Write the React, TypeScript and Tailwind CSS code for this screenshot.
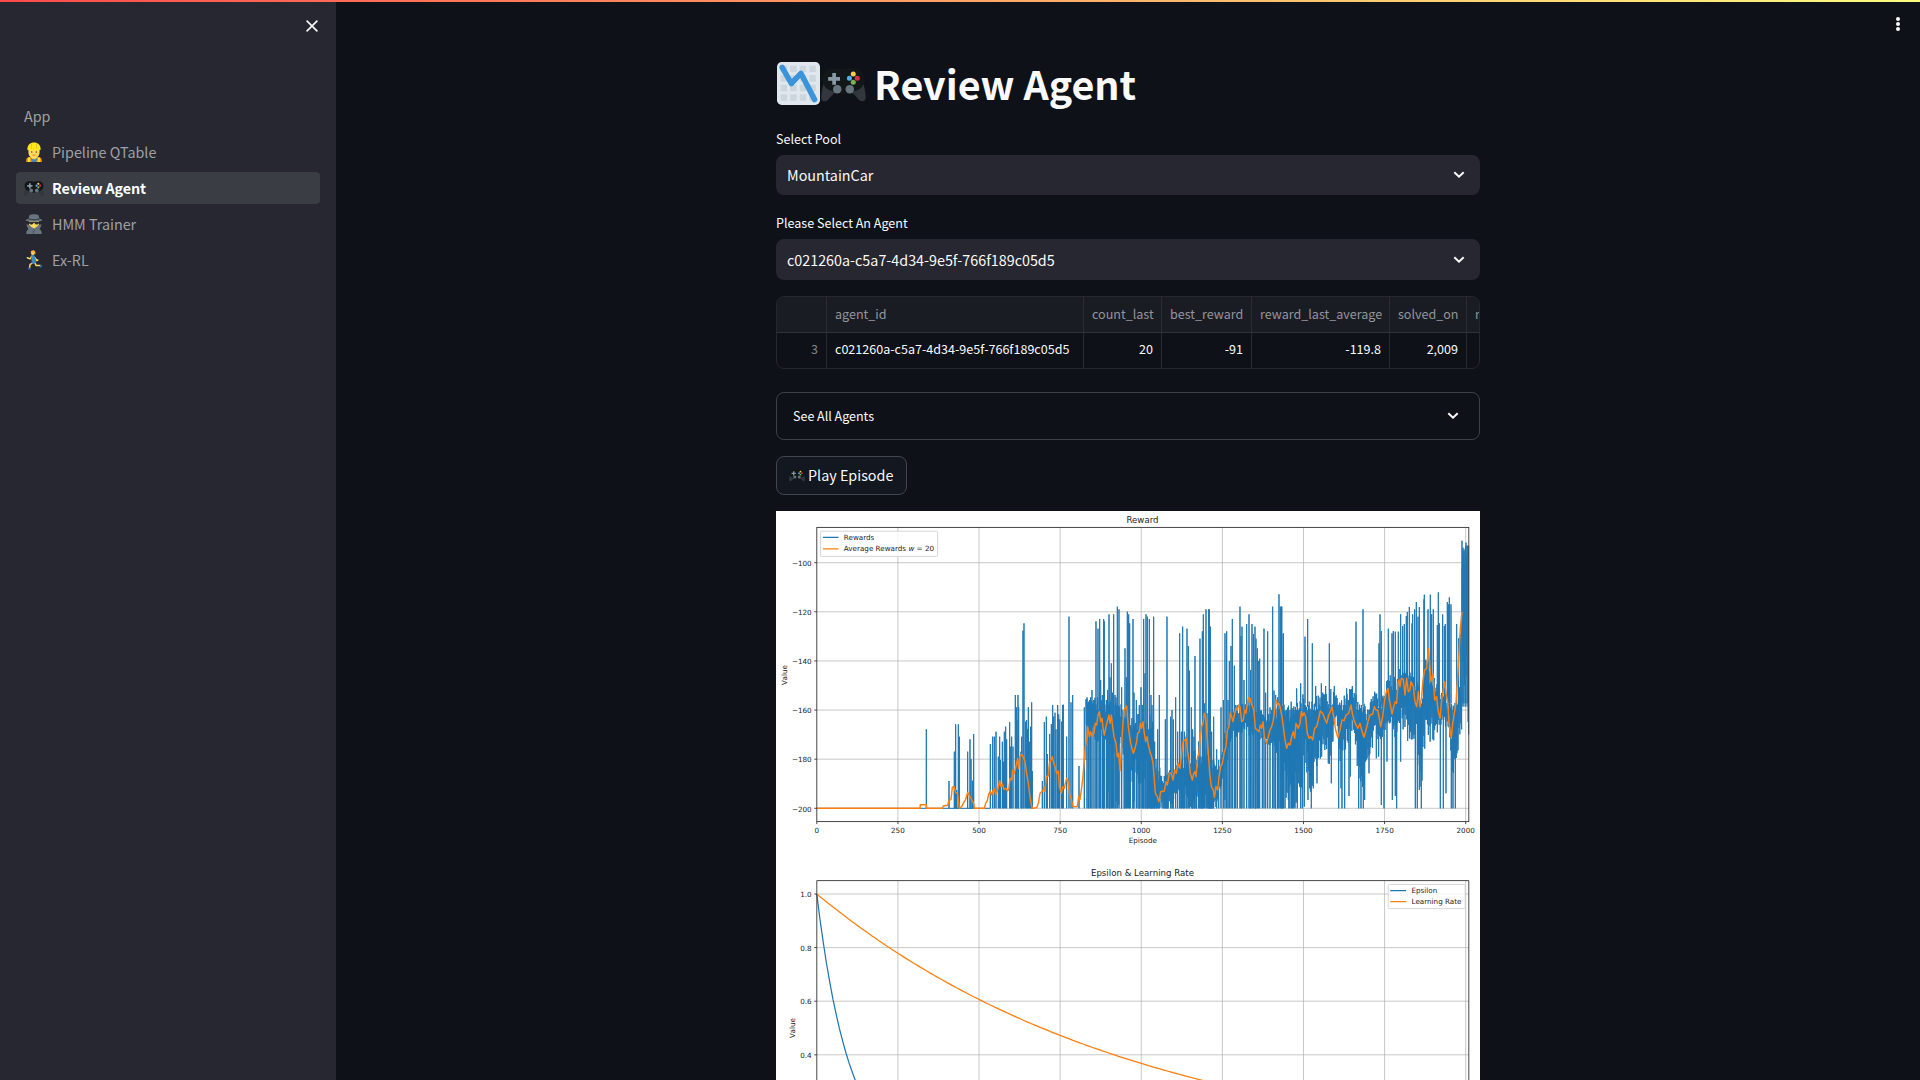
import React from "react";

type Pt = [number, number];

function pairs(s: string): Pt[] {
  return s
    .trim()
    .split(/\s+/)
    .map((p) => p.split(",").map(Number) as Pt);
}
const shift = (list: Pt[], dx: number, dy: number): Pt[] => list.map(([x, y]) => [x + dx, y + dy]);

// Series data is in thirds of a pixel, origin at (770, 560).
const PEAKS: Pt[] = [
  ...pairs(`469,508 537,663 553,575 557,493 560,690 565,493 568,530 593,575 600,538 603,597 607,662 611,522
  661,552 668,530 673,530 678,515 685,590 689,530 691,600 697,545 700,605 703,515 707,500 710,538 719,486 722,560 725,530 729,560 736,405 739,442 741,480 744,405 746,442 753,575 755,530 759,212 762,190 767,485 770,480 773,507 775,442 778,545 782,500 785,427 787,633
  817,663 823,486 829,470 832,582 839,522 844,492 848,435 851,470 855,458 858,508 863,435 866,463 869,478 875,485 878,435 880,434 890,530`),
  ...shift(
    pairs(`57,170 63,427 68,405 87,618 103,442 111,412 115,427 122,412 126,390 132,420 138,184 144,206 149,177 152,360 157,405 161,177 163,184 169,420 173,390 177,163 180,352 184,310 188,398 191,163 195,405 198,412 202,140 207,148 215,382 225,265 229,352 232,155 236,163 239,190 249,177 252,398 259,420 264,463 268,435 273,382 277,435 281,177 285,340 288,163 292,170 298,177 303,405 306,435 311,170 314,545 318,597 323,508 328,405 346,478 351,170 362,470 366,450 370,478 377,412 383,515 389,220 394,515 398,200 403,515 408,530 411,206 415,258 418,332 424,442 428,508 432,530 435,288 440,600 446,545 450,236 453,590 457,214 460,163 464,430 468,148 471,460 476,148 478,148 481,200 485,515 491,470 500,568 506,600 513,442 520,420 525,220 530,214 534,420 538,303 543,258 547,177 553,317 557,435 562,435 570,140 573,228 576,200 582,360 590,192 597,163 602,330 606,192 610,222 615,200 618,236 622,265 625,303 629,296 637,463 642,206 647,398 653,214 660,442 668,140 672,392 677,405 683,412 687,103 691,140 695,140 700,222 705,450`),
    840,
    0,
  ),
];
const LATE_PEAKS: Pt[] = shift(
  pairs(`5,290 10,370 50,535 62,520 75,380 83,327 97,400 107,528 124,520 137,528 148,400 163,528 200,535 217,528 228,335 249,298 284,545 297,400 300,313 304,363 325,356 336,370 340,363 346,365 355,365 362,313 368,348 373,342 379,318 382,306 388,291 396,340 398,313 404,298 409,276 414,320 418,291 432,268 433,254 444,298 451,254 455,313 460,298 472,345 475,247 478,340 488,313 493,348 496,342 502,276 505,283 508,262 513,283 530,342 536,385 542,370 546,92 549,113 552,125 556,115 558,98 562,107`),
  1530,
  -150,
);
const DIPS: Pt[] = shift(
  pairs(`10,870 20,845 25,870 30,895 35,895 40,895 45,895 52,895 62,895 73,890 84,870 89,835 94,895 100,835 111,820 125,740 145,760 154,820 176,895 183,835 186,895 194,895 207,858 211,800 236,895 240,805 243,895 250,895 254,870 267,790 289,745 296,740 304,885 312,895 321,755 337,870 346,858 350,895 362,755 406,895 412,895 418,840 420,830 424,895 481,895 490,895 498,850 514,895 519,895 526,895 531,730`),
  1530,
  -150,
);

// Dense body of the series: x, upper edge, lower edge, share of dips to the floor.
const BODY: [number, number, number, number][] = [
  [948, 425, 500, 0.4], [1000, 420, 540, 0.4], [1050, 440, 560, 0.45], [1080, 480, 640, 0.7], [1150, 470, 620, 0.7],
  [1152, 620, 740, 0.3], [1190, 650, 745, 0.3], [1225, 610, 680, 0.3], [1260, 590, 720, 0.5], [1320, 570, 740, 0.6],
  [1330, 610, 740, 0.2], [1345, 640, 700, 0.1], [1360, 540, 630, 0.2], [1385, 455, 530, 0.2], [1420, 435, 500, 0.2],
  [1460, 440, 520, 0.2], [1490, 470, 540, 0.2], [1530, 435, 560, 0.2], [1550, 445, 690, 0.2], [1590, 430, 700, 0.1],
  [1600, 410, 540, 0], [1620, 440, 670, 0], [1640, 420, 590, 0], [1660, 390, 530, 0], [1680, 400, 580, 0],
  [1698, 385, 470, 0], [1712, 420, 590, 0], [1730, 405, 530, 0], [1748, 390, 490, 0], [1768, 440, 640, 0],
  [1785, 440, 640, 0], [1800, 430, 570, 0], [1815, 400, 510, 0], [1832, 430, 530, 0], [1850, 360, 490, 0],
  [1875, 350, 510, 0], [1895, 330, 470, 0], [1920, 340, 520, 0], [1940, 350, 490, 0], [1952, 430, 650, 0],
  [1965, 300, 510, 0], [1990, 350, 510, 0], [2005, 390, 490, 0], [2020, 400, 480, 0], [2035, 440, 490, 0],
  [2045, 440, 600, 0], [2055, 440, 620, 0], [2065, 400, 520, 0], [2074, 380, 500, 0], [2076, -20, 380, 0],
  [2087, -30, 370, 0], [2095, -30, 400, 0],
];

const FLOOR = 745;

function buildRewards(): string {
  let seed = 11;
  const rnd = () => {
    seed = (seed * 16807) % 2147483647;
    return seed / 2147483647;
  };
  let d = `M140,${FLOOR}H660`;
  for (const [x, top] of PEAKS) d += `M${x - 0.5},${FLOOR}L${x},${top}L${x + 0.5},${FLOOR}`;
  for (const [x, top] of LATE_PEAKS) d += `M${x - 0.5},440L${x},${top}L${x + 0.5},${Math.max(430, top + 20)}`;
  for (const [x, low] of DIPS) d += `M${x - 0.5},450L${x},${low}L${x + 0.5},450`;
  let i = 0;
  d += "M948,600";
  for (let x = 948; x <= 2093; x += 2.7) {
    while (i < BODY.length - 2 && BODY[i + 1][0] < x) i++;
    const [x0, t0, b0, p] = BODY[i];
    const [x1, t1, b1] = BODY[i + 1];
    const f = (x - x0) / (x1 - x0);
    const top = t0 + (t1 - t0) * f;
    const bot = b0 + (b1 - b0) * f;
    const h = bot - top;
    const a = top + (rnd() - 0.25) * Math.min(h, 150) * 0.4;
    const b = rnd() < p * 0.6 ? (rnd() < 0.75 ? FLOOR : 690 + rnd() * 50) : Math.min(FLOOR, bot + (rnd() - 0.5) * h * 0.5);
    d += `L${x.toFixed(1)},${a.toFixed(0)}L${(x + 1).toFixed(1)},${b.toFixed(0)}`;
  }
  d += "M2096,-43V524";
  return d;
}
const REWARDS = buildRewards();

const AVERAGE = [
  ...pairs(`140,745 450,745 451,734 469,734 470,745 517,745 520,738 533,736 537,722 543,718 547,682 552,679 557,697 563,703 568,745 575,740 580,730 587,718 590,708 593,697 598,707 604,717 611,730 613,745 643,745 647,730 652,722 656,702 661,695 665,705 668,695 672,685 677,703 683,690 689,662 693,680 697,672 702,688 708,685 712,693 716,690 720,655 725,660 728,630 733,640 738,618 743,595 746,625 750,590 754,583 760,590 765,605 770,640 775,670 780,710 785,740 788,745 800,743 805,730 810,700 815,695 820,690 822,680 825,695 829,650 835,648 838,610 843,600 847,590 850,605 855,620 860,640 865,633 868,680 874,700 878,680 883,685 886,670 890,655 895,670 898,700 903,715 907,730 909,740 922,740 926,710 930,718 934,690 938,660 942,610 946,560 950,540 953,500 958,530 962,515 966,528 972,520 976,490 980,495 984,465 988,455 992,485 996,475 1000,510 1003,525 1008,500 1013,480 1017,465 1020,490 1024,465 1028,500 1032,530 1038,550 1042,590 1046,580 1050,632 1055,560 1058,500 1062,450 1070,438 1075,500 1079,530`),
  ...shift(
    pairs(`242,550 247,570 250,580 255,565 260,545 263,520 268,515 271,490 275,505 279,485 283,520 287,545 291,530 295,555 300,575 305,590 309,610 313,660 316,700 322,710 327,725 332,695 343,693 348,665 352,675 358,640 364,640 369,660 374,630 379,640 384,610 390,625 394,590 399,545 405,540 409,535 412,570 417,600 421,640 427,660 431,640 435,635 438,650 443,590 447,580 451,530 455,500 459,490 463,460 467,470 471,525 475,580 479,640 484,680 490,690 493,712 498,680 503,690 507,650 512,620 517,610 522,580 528,560 532,510 537,500 541,460 545,470 549,485 553,465 558,445 562,450 566,435 570,440 575,485 580,480 584,450 588,460 592,430 596,412 600,415 604,430 608,440 612,455 616,505 622,510 627,515 631,495 635,505 639,485 643,530 650,550 655,530 660,510 665,500 669,485 673,460 678,420 683,435 687,430`),
    840,
    0,
  ),
  ...shift(
    pairs(`0,590 5,615 10,650 15,690 20,715 25,700 30,705 35,680 40,665 44,685 48,640 55,655 60,640 64,605 68,618 72,608 77,620 82,670 87,685 93,680 98,690 104,655 110,650 116,625 121,603 128,610 134,625 140,640 146,615 151,605 156,590 161,620 167,660 174,683 180,660 186,630 192,632 198,615 206,610 213,585 217,610 222,630 228,645 234,655 240,640 245,660 252,682 258,660 264,635 270,615 278,612 283,590 288,600 293,600 298,625 302,650 308,620 314,570 318,550 324,535 328,570 334,600 336,612 341,590 346,575 350,580 354,520 357,510 360,530 364,505 370,508 375,555 380,505 385,545 390,540 393,515 400,530 405,575 410,590 415,545 420,590 425,560 429,510 434,480 440,475 445,415 449,460 453,515 459,492 464,570 470,560 474,600 480,625 485,570 489,545 494,515 498,550 503,575 507,640 514,685 518,640 523,610 528,580 533,500 537,430 541,355 546,305`),
    1530,
    -150,
  ),
]
  .map((p) => p.join(","))
  .join(" ");

const xAt = (ep: number) => 816.8 + ep * 0.32445;
const decay = (rate: number) => {
  let s = "";
  for (let ep = 0; ep <= 2009; ep += 10) s += `${xAt(ep).toFixed(1)},${(1162 - 268 * Math.exp(-rate * ep)).toFixed(1)} `;
  return s;
};
const X_TICKS = [0, 250, 500, 750, 1000, 1250, 1500, 1750, 2000];

function Charts() {
  return (
    <svg viewBox="776 511 704 569" className="block h-[569px] w-[704px] bg-white" fontFamily="'DejaVu Sans', sans-serif" fontSize="7.2" fill="#1c1c1c">
      <g stroke="#b0b0b0" strokeOpacity="0.7" strokeWidth="1">
        {X_TICKS.slice(1).map((t) => (
          <path key={t} d={`M${xAt(t)},527.3V821.5M${xAt(t)},880.6V1080`} />
        ))}
        {[0, 1, 2, 3, 4, 5].map((i) => (
          <path key={i} d={`M816.8,${562.7 + i * 49.12}H1468.8`} />
        ))}
        {[0, 1, 2, 3].map((i) => (
          <path key={i} d={`M816.8,${894 + i * 53.6}H1468.8`} />
        ))}
      </g>
      <g transform="translate(770 560) scale(0.33333)" fill="none" strokeLinejoin="round">
        <path d={REWARDS} stroke="#1f77b4" strokeWidth="3" strokeLinejoin="bevel" />
        <polyline points={AVERAGE} stroke="#ff7f0e" strokeWidth="4.400" />
      </g>
      <g fill="none" strokeWidth="1.250">
        <polyline points={decay(0.01)} stroke="#1f77b4" />
        <polyline points={decay(0.001)} stroke="#ff7f0e" />
      </g>
      <g fill="none" stroke="#333" strokeWidth="0.9">
        <rect x="816.8" y="527.4" width="652" height="294.2" />
        <path d="M816.8,1080V880.6H1468.8V1080" />
        {X_TICKS.map((t) => (
          <path key={t} d={`M${xAt(t)},821.6v2.5`} />
        ))}
        {[0, 1, 2, 3, 4, 5].map((i) => (
          <path key={i} d={`M816.8,${562.7 + i * 49.12}h-2.5`} />
        ))}
        {[0, 1, 2, 3].map((i) => (
          <path key={i} d={`M816.8,${894 + i * 53.6}h-2.5`} />
        ))}
      </g>
      <g textAnchor="end">
        {[100, 120, 140, 160, 180, 200].map((v, i) => (
          <text key={v} x="811.7" y={565.9 + i * 49.12}>{`−${v}`}</text>
        ))}
        {["1.0", "0.8", "0.6", "0.4"].map((v, i) => (
          <text key={v} x="811.7" y={896.9 + i * 53.6}>{v}</text>
        ))}
      </g>
      <g textAnchor="middle">
        {X_TICKS.map((t) => (
          <text key={t} x={xAt(t)} y="832.5">{t}</text>
        ))}
        <text x="1142.8" y="842.7">Episode</text>
        <text x="1142.5" y="522.9" fontSize="8.6">Reward</text>
        <text x="1142.5" y="876.2" fontSize="8.65">Epsilon &amp; Learning Rate</text>
        <text transform="translate(786.7 675) rotate(-90)">Value</text>
        <text transform="translate(794.8 1028) rotate(-90)">Value</text>
      </g>
      <g fill="#fff" fillOpacity="0.8" stroke="#ccc" strokeWidth="0.8">
        <rect x="820.4" y="531.2" width="117.2" height="25.2" rx="1.2" />
        <rect x="1388.2" y="884.4" width="77" height="24.2" rx="1.2" />
      </g>
      <g strokeWidth="1.250">
        <path d="M823,537.3h15.5M1390.2,890.5h15.8" stroke="#1f77b4" />
        <path d="M823,548.8h15.5M1390.2,901.5h15.8" stroke="#ff7f0e" />
      </g>
      <text x="843.8" y="539.8">Rewards</text>
      <text x="843.8" y="551.3">
        Average Rewards <tspan fontStyle="italic">w</tspan> = 20
      </text>
      <text x="1411.5" y="893.1">Epsilon</text>
      <text x="1411.5" y="904.1">Learning Rate</text>
    </svg>
  );
}

function Gamepad({ className }: { className: string }) {
  return (
    <svg viewBox="0 0 36 36" className={className}>
      <path fill="#31373D" d="M4 13C1.500 18 .3 25.500.2 29.500c0 2.600 3.400 3.700 5.300 1.700C8 28.500 10.500 24.500 14 24.500h8c3.500 0 6 4 8.500 6.700 1.900 2 5.300.9 5.300-1.700C35.700 25.500 34.500 18 32 13z" />
      <path fill="#141719" d="M9 6h5.500c1 0 1.500.8 3.500.8S20.500 6 21.500 6H27c4.500 0 8 3.700 8 8.500S31.500 23 27 24l-4.500 2h-9L9 24c-4.500-1-8-4.700-8-9.500S4.500 6 9 6z" />
      <path fill="#8899A6" d="M9 9.500h3v3.200h3.200v3H12V19H9v-3.300H5.700v-3H9z" />
      <circle fill="#66757F" cx="13" cy="22.500" r="3.400" />
      <circle fill="#66757F" cx="23" cy="22.500" r="3.400" />
      <circle fill="#FFCC4D" cx="25.800" cy="10.400" r="2" />
      <circle fill="#55ACEE" cx="22.700" cy="13.800" r="2" />
      <circle fill="#DD2E44" cx="29" cy="13.800" r="2" />
      <circle fill="#77B255" cx="25.800" cy="17" r="2" />
    </svg>
  );
}

function ChartDown() {
  return (
    <svg viewBox="0 0 36 36" className="ml-px size-[43px]">
      <rect width="36" height="36" rx="4" fill="#E1E8ED" />
      <g fill="#CCD6DD">
        {[3, 11, 19, 27].map((x) => [3, 11, 19, 27].map((y) => <rect key={`${x}-${y}`} x={x} y={y} width="5.500" height="5.500" />))}
      </g>
      <path d="M4.300 4.500 12 18 20 9.500 31.500 31.500" fill="none" stroke="#3B94D9" strokeWidth="4.600" strokeLinecap="round" strokeLinejoin="round" />
    </svg>
  );
}

function Worker() {
  return (
    <svg viewBox="0 0 36 36" className="size-5">
      <path fill="#F4900C" d="M4 36v-3c0-4 3-6 7-6h14c4 0 7 2 7 6v3z" />
      <path fill="#FFE51E" d="M7 36v-8h4v8zM25 36v-8h4v8z" />
      <path fill="#4289C1" d="M12 27h12l-2 9h-8z" />
      <path fill="#F9CA55" d="M13 24h10v5c-2 3-8 3-10 0z" />
      <path fill="#FFDC5D" d="M8 12h20v6c0 7-4 11-10 11S8 25 8 18z" />
      <path fill="#FFE51E" d="M6 14C6 5 11 1 18 1s12 4 12 13l-3 1H9z" />
      <path fill="#CCB718" d="M13 3h1v9h-1zM22 3h1v9h-1z" />
      <circle cx="14" cy="18" r="1.200" fill="#662113" />
      <circle cx="22" cy="18" r="1.200" fill="#662113" />
      <path fill="#DF4F3E" d="M14 23h8c-1 2-7 2-8 0z" />
    </svg>
  );
}

function Spy() {
  return (
    <svg viewBox="0 0 36 36" className="size-5">
      <path fill="#FFDC5D" d="M9 11h18v9c0 5-4 9-9 9s-9-4-9-9z" />
      <path fill="#66757F" d="M4 36c0-4 1-7 4-8l-4-9c4-1 7 1 9 4l5 3 5-3c2-3 5-5 9-4l-4 9c3 1 4 4 4 8z" />
      <path fill="#292F33" d="M9 14h18v2c-1 4-7 4-8 0h-2c-1 4-7 4-8 0z" />
      <path fill="#66757F" d="M10 2c3-2 13-2 16 0l2 7c3 0 5 1 5 3-7 2-23 2-30 0 0-2 2-3 5-3z" />
      <path fill="#3B474F" d="M8.300 7.500c6 2 13.400 2 19.400 0l.5 2.500c-6 2-14.400 2-20.400 0z" />
      <path fill="none" stroke="#3B474F" strokeWidth="1.200" d="M17 27l2 3-3 2 2 4" />
    </svg>
  );
}

function Runner() {
  return (
    <svg viewBox="0 0 36 36" className="size-5">
      <circle cx="16" cy="5.500" r="3.500" fill="#FFDC5D" />
      <path fill="#FFAC33" d="M12 4c0-4.500 8-5 8.500 0v3.500l-3.500-3z" />
      <path fill="none" stroke="#FFDC5D" strokeWidth="2.600" strokeLinecap="round" strokeLinejoin="round" d="M14 11 11 16 6 14M20 14l3 5 2-1M16 23l-5 3-1 6M19 22l3 6h7" />
      <path fill="#3B88C3" d="M13 10c3-2 6-1 7 2l2 11-8 2z" />
      <path fill="#2A6797" d="M7 32h5v3H7zM28 29l4-3 1 3-3 4z" />
    </svg>
  );
}

function Chevron() {
  return (
    <svg viewBox="0 0 12 8" className="h-[8px] w-[12px]" fill="none" stroke="#fafafa" strokeWidth="2">
      <path d="M1.300 1.200 6 5.700l4.700-4.500" />
    </svg>
  );
}

const SANS = "font-['Noto_Sans_CJK_SC','Noto_Sans',sans-serif]";

function NavItem({ icon, label, active }: { icon?: React.ReactNode; label: string; active?: boolean }) {
  return (
    <div className={`flex h-8 items-center gap-2 rounded pl-2 text-[14.33px] leading-8 ${active ? "bg-[#3b3d45] font-bold tracking-[-0.12px] text-white" : "text-[#a0a0a4]"}`}>
      {icon}
      <span>{label}</span>
    </div>
  );
}

function Select({ label, value, className, field }: { label: string; value: string; className: string; field: string }) {
  return (
    <div className={className}>
      <div className="h-6 text-[12.55px] leading-6">{label}</div>
      <div className={`mt-1 flex items-center justify-between rounded-lg bg-[#262730] pr-[15px] pl-[11px] text-[14.33px] leading-10 ${field}`}>
        <span>{value}</span>
        <Chevron />
      </div>
    </div>
  );
}

const COLUMNS = [
  { name: "", value: "3", width: "w-[50px]", align: "text-right text-[#82848a]" },
  { name: "agent_id", value: "c021260a-c5a7-4d34-9e5f-766f189c05d5", width: "w-[257px]", align: "text-left" },
  { name: "count_last", value: "20", width: "w-[78px]", align: "text-right" },
  { name: "best_reward", value: "-91", width: "w-[90px]", align: "text-right" },
  { name: "reward_last_average", value: "-119.8", width: "w-[138px]", align: "text-right" },
  { name: "solved_on", value: "2,009", width: "w-[77px]", align: "text-right" },
  { name: "reward", value: "", width: "w-[90px]", align: "text-left" },
];

export default function App() {
  return (
    <div className={`flex h-[1080px] w-[1920px] flex-col overflow-hidden bg-[#0e1117] text-[#fafafa] ${SANS}`}>
      <div className="h-[2px] shrink-0 bg-[linear-gradient(90deg,#ff4b4b,#fffd80)]" />
      <div className="flex min-h-0 flex-1">
        <aside className="flex w-[336px] shrink-0 flex-col bg-[#262730]">
          <div className="flex h-[97px] justify-end pt-[18px] pr-[18px]">
            <svg viewBox="0 0 12 12" className="size-[12px]" stroke="#fafafa" strokeWidth="1.600">
              <path d="M.6.600l10.800 10.800M11.400.600.600 11.400" />
            </svg>
          </div>
          <nav className="flex flex-col gap-1 px-4 pt-px">
            <NavItem label="App" />
            <NavItem icon={<Worker />} label="Pipeline QTable" />
            <NavItem icon={<Gamepad className="size-5" />} label="Review Agent" active />
            <NavItem icon={<Spy />} label="HMM Trainer" />
            <NavItem icon={<Runner />} label="Ex-RL" />
          </nav>
        </aside>
        <main className="flex flex-1 justify-center">
          <div className="w-[704px] pt-[52px]">
            <h1 className="flex h-[58px] items-center text-[39.4px] leading-[58px] font-bold">
              <ChartDown />
              <Gamepad className="ml-px size-[45px]" />
              <span className="ml-[8px]">Review Agent</span>
            </h1>
            <Select className="mt-[15px]" label="Select Pool" value="MountainCar" field="h-10" />
            <Select className="mt-4" label="Please Select An Agent" value="c021260a-c5a7-4d34-9e5f-766f189c05d5" field="h-[41px]" />
            <div className="mt-[16px] flex h-[73px] overflow-hidden rounded-lg border border-[#26282e] text-[12.55px]">
              {COLUMNS.map((c) => (
                <div key={c.name} className={`shrink-0 border-r border-[#2a2c32] ${c.width} ${c.align}`}>
                  <div className="h-[36px] border-b border-[#303239] bg-[#1a1c23] px-2 leading-[34px] text-[#93959b]">{c.name}</div>
                  <div className="h-[35px] px-2 leading-[32px]">{c.value}</div>
                </div>
              ))}
            </div>
            <div className="mt-[23px] flex h-12 items-center justify-between rounded-lg border border-[#3d4044] pr-5 pl-4 text-[12.5px]">
              <span>See All Agents</span>
              <Chevron />
            </div>
            <button className="mt-4 mb-4 flex h-[39px] w-[131px] items-center rounded-lg border border-[#42454b] bg-[#131720] pb-[2px] pl-[12px] text-[14.33px]">
              <Gamepad className="mr-[3px] size-4" />
              <span className="whitespace-nowrap">Play Episode</span>
            </button>
            <Charts />
          </div>
          <div className="absolute top-[17px] right-[20px] flex flex-col gap-px">
            <i className="size-1 rounded-full bg-[#fafafa]" />
            <i className="size-1 rounded-full bg-[#fafafa]" />
            <i className="size-1 rounded-full bg-[#fafafa]" />
          </div>
        </main>
      </div>
    </div>
  );
}
